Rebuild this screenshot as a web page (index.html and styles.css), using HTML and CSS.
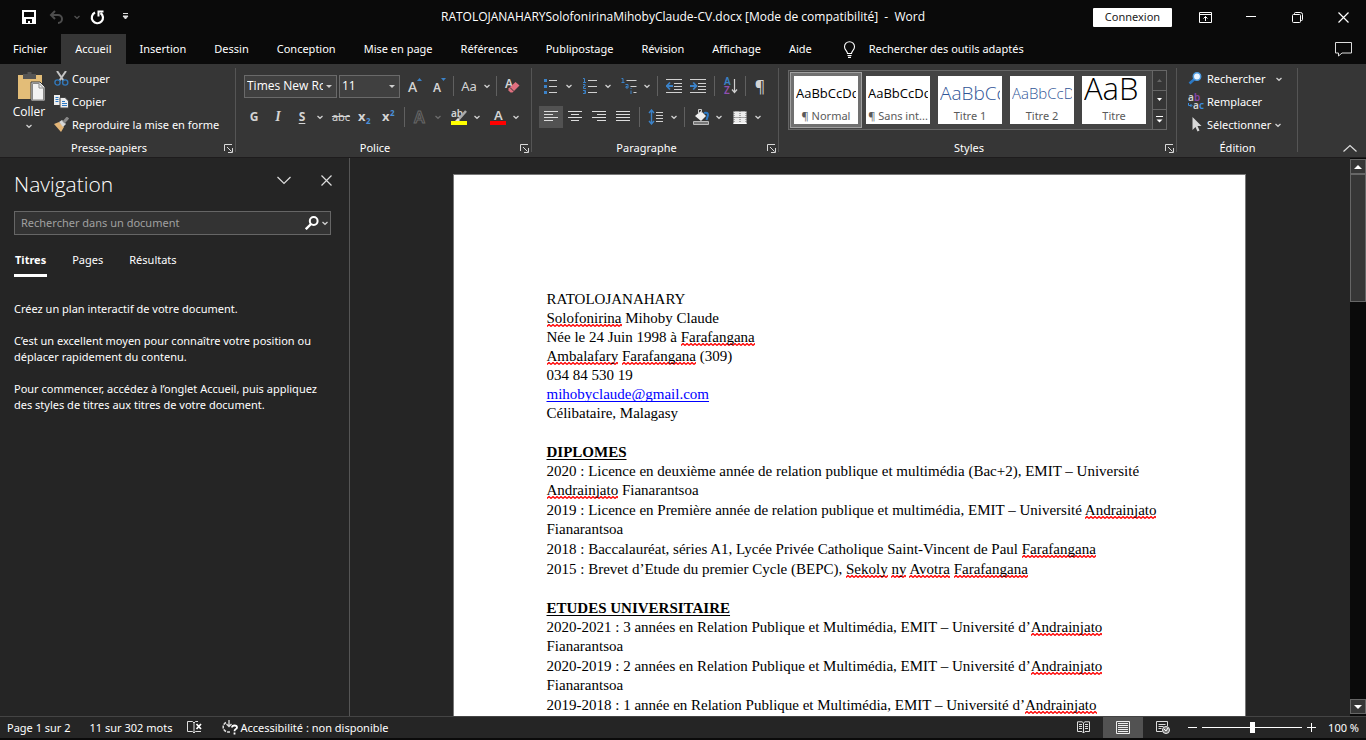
FILE: index.html
```
<!DOCTYPE html>
<html lang="fr">
<head>
<meta charset="utf-8">
<title>RATOLOJANAHARYSolofonirinaMihobyClaude-CV.docx - Word</title>
<link rel="stylesheet" href="styles.css">
</head>
<body>
<svg class="defs" aria-hidden="true">
  <symbol id="chev" viewBox="0 0 8 8"><path d="M1.500 3 4 5.300 6.500 3" fill="none" stroke="#d0d0d0" stroke-width="1.300"/></symbol>
  <symbol id="launch" viewBox="0 0 9 9"><path d="M.5 7V.5H8M3 3l4.500 4.500M8.500 4v4.500H4" fill="none" stroke="#d8d8d8"/></symbol>
</svg>

<header class="titlebar">
  <div class="quick">
    <button class="qbtn" aria-label="Enregistrer"><svg width="14" height="14" viewBox="0 0 14 14"><path d="M1 1h12v12H1z" fill="none" stroke="#fff" stroke-width="2"/><path d="M1 7h12v6H1z" fill="#fff"/><path d="M4 9h6v4H8v-2H6v2H4z" fill="#0a0a0a"/></svg></button>
    <button class="qbtn" aria-label="Annuler"><svg width="16" height="14" viewBox="0 0 16 14"><path d="M6 1 2 5l4 4M2.500 5H9a4 4 0 0 1 0 8" fill="none" stroke="#4d4d4d" stroke-width="2"/></svg></button>
    <button class="mini" aria-label="Options d'annulation"><svg width="8" height="8" class="dim"><use href="#chev"/></svg></button>
    <button class="qbtn redo" aria-label="Répéter"><svg width="15" height="15" viewBox="0 0 15 15"><path d="M5 2.600A5.600 5.600 0 1 0 10.500 3" fill="none" stroke="#fff" stroke-width="2.200"/><path d="M8.500 6.500V1.500h5" fill="none" stroke="#fff" stroke-width="2"/></svg></button>
    <button class="qbtn" aria-label="Personnaliser"><svg width="7" height="8" viewBox="0 0 7 8"><path d="M1 .5h5M1 3h5L3.500 6z" fill="#ddd" stroke="#ddd"/></svg></button>
  </div>
  <div class="doc-title">RATOLOJANAHARYSolofonirinaMihobyClaude-CV.docx [Mode de compatibilité]&nbsp; -&nbsp; Word</div>
  <div class="window-tools">
    <button class="login">Connexion</button>
    <button class="win" aria-label="Options du ruban"><svg width="13" height="11" viewBox="0 0 13 11"><path d="M.5.500h12v10H.5zM.5 2.500h12M6.500 9V4.500M4.500 6.500l2-2 2 2" fill="none" stroke="#fff"/></svg></button>
    <button class="win" aria-label="Réduire"><svg width="10" height="10" viewBox="0 0 10 10"><path d="M0 4.500h10" stroke="#fff"/></svg></button>
    <button class="win" aria-label="Niveau inférieur"><svg width="11" height="11" viewBox="0 0 11 11"><path d="M.5 3.500q0-1 1-1h6q1 0 1 1v6q0 1-1 1h-6q-1 0-1-1zM2.500 2V1.500q0-1 1-1H8.500q2 0 2 2v5q0 1-1 1H9" fill="none" stroke="#fff"/></svg></button>
    <button class="win" aria-label="Fermer"><svg width="11" height="11" viewBox="0 0 11 11"><path d="m.5.500 10 10m0-10-10 10" stroke="#fff" stroke-width="1.200"/></svg></button>
  </div>
</header>

<nav class="tabs">
  <button class="tab first">Fichier</button>
  <button class="tab active">Accueil</button>
  <button class="tab">Insertion</button>
  <button class="tab">Dessin</button>
  <button class="tab">Conception</button>
  <button class="tab">Mise en page</button>
  <button class="tab">Références</button>
  <button class="tab">Publipostage</button>
  <button class="tab">Révision</button>
  <button class="tab">Affichage</button>
  <button class="tab">Aide</button>
  <button class="tab tell"><svg width="13" height="17" viewBox="0 0 13 17"><path d="M4.500 12.500C4.500 10 1.500 9 1.500 5.700a5 5 0 0 1 10 0C11.500 9 8.500 10 8.500 12.500zM4.500 14.500h4M5 16.400h3" fill="none" stroke="#fff" stroke-width="1.100"/></svg>Rechercher des outils adaptés</button>
  <button class="comment" aria-label="Commentaires"><svg width="17" height="15" viewBox="0 0 17 15"><path d="M.5.500h16v10.500H7L3.500 14v-3h-3z" fill="none" stroke="#ddd"/></svg></button>
</nav>

<section class="ribbon">
  <div class="group clipboard">
    <div class="body clip-body">
      <button class="paste">
        <svg width="30" height="31" viewBox="0 0 30 31"><path d="M2 4h24v24H2z" fill="#e3bd78"/><path d="M7 3h4.500V1h4v2H20v5H7z" fill="#555"/><path d="M15 11h9l5 5v14H15z" fill="#eee" stroke="#363636"/><path d="M16.500 12.500h6.500l4.500 4.500v12h-11z" fill="#f2f2f2" stroke="#888"/><path d="M23 12.500V17h4.500" fill="none" stroke="#888"/></svg>
        <span>Coller</span>
        <svg width="8" height="8"><use href="#chev"/></svg>
      </button>
      <div class="stack">
        <button class="item"><svg width="15" height="15" viewBox="0 0 15 15"><path d="m3 0 6.500 9.500M12 0 5.500 9.500" stroke="#c4c4c4" stroke-width="2"/><circle cx="3.500" cy="11.500" r="2.600" fill="none" stroke="#3277b8" stroke-width="1.400"/><circle cx="11.200" cy="11.500" r="2.600" fill="none" stroke="#3277b8" stroke-width="1.400"/></svg>Couper</button>
        <button class="item"><svg width="15" height="15" viewBox="0 0 15 15"><path d="M0 1h6v10H0z" fill="#eee"/><path d="M1.500 3.500h3m-3 2h3m-3 2h3" stroke="#2b78c4"/><path d="M6 3.500h5l3.500 3.500v7H6z" fill="#eee" stroke="#444"/><path d="M8 7.500h3m-3 2h5m-5 2h5" stroke="#2b78c4"/></svg>Copier</button>
        <button class="item"><svg width="15" height="15" viewBox="0 0 15 15"><path d="m0 7 5-2 5 5-3 5z" fill="#e3b577"/><path d="M5 5 8 3l4 4-3 3z" fill="#d8d8d8"/><path d="m9.500 5.500 4.500-5" stroke="#888" stroke-width="3"/></svg>Reproduire la mise en forme</button>
      </div>
    </div>
    <div class="label"><span>Presse-papiers</span><button class="launch" aria-label="Presse-papiers"><svg width="9" height="9"><use href="#launch"/></svg></button></div>
  </div>

  <div class="group font">
    <div class="body">
      <div class="row">
        <div class="combo name"><select aria-label="Police"><option>Times New Roman</option></select></div>
        <div class="combo size"><select aria-label="Taille"><option>11</option></select></div>
        <button class="btn" aria-label="Agrandir"><svg width="18" height="20" viewBox="0 0 18 20"><text x="3" y="16" class="g15">A</text><path d="m12 5 2.500-3L17 5z" fill="#3b82c8"/></svg></button>
        <button class="btn" aria-label="Réduire la police"><svg width="18" height="20" viewBox="0 0 18 20"><text x="4" y="16" class="g12">A</text><path d="m12 2 2.500 3L17 2z" fill="#3b82c8"/></svg></button>
        <i class="sep"></i>
        <button class="split"><span class="big">Aa</span><svg width="8" height="8"><use href="#chev"/></svg></button>
        <i class="sep"></i>
        <button class="btn wipe" aria-label="Effacer la mise en forme"><svg width="16" height="20" viewBox="0 0 16 20"><text x="1" y="12" class="g12">A</text><path d="m4.500 12.500 7-6.500 4 3.500-7 7h-2l-2-2z" fill="#e0707f"/><path d="m6 11.500 4 4" stroke="#363636"/></svg></button>
      </div>
      <div class="row row-tools">
        <button class="btn b">G</button>
        <button class="btn it">I</button>
        <button class="split"><span class="b u">S</span><svg width="8" height="8"><use href="#chev"/></svg></button>
        <button class="btn strike">abc</button>
        <button class="btn" aria-label="Indice"><svg width="16" height="20" viewBox="0 0 16 20"><text x="1" y="14" class="gx">x</text><text x="9" y="17" class="gs">2</text></svg></button>
        <button class="btn" aria-label="Exposant"><svg width="16" height="20" viewBox="0 0 16 20"><text x="1" y="14" class="gx">x</text><text x="9" y="9" class="gs">2</text></svg></button>
        <i class="sep"></i>
        <button class="split off" aria-label="Effets de texte"><svg width="18" height="20" viewBox="0 0 18 20"><text x="3" y="16" class="gout">A</text></svg><svg width="8" height="8" class="dim"><use href="#chev"/></svg></button>
        <button class="split" aria-label="Surlignage"><svg width="18" height="20" viewBox="0 0 18 20"><text x="1" y="10" class="gab">ab</text><path d="m16 4-7 8" stroke="#aaa" stroke-width="2.500"/><path d="m5 14 3-3 2 2-1 1z" fill="#ddd"/><path d="M1 14h16v4H1z" fill="#ff0"/></svg><svg width="8" height="8"><use href="#chev"/></svg></button>
        <button class="split" aria-label="Couleur de police"><svg width="18" height="20" viewBox="0 0 18 20"><text x="5" y="13" class="g13">A</text><path d="M1 14h16v4H1z" fill="red"/></svg><svg width="8" height="8"><use href="#chev"/></svg></button>
      </div>
    </div>
    <div class="label"><span>Police</span><button class="launch" aria-label="Options de police"><svg width="9" height="9"><use href="#launch"/></svg></button></div>
  </div>

  <div class="group para">
    <div class="body">
      <div class="row">
        <button class="split" aria-label="Puces"><svg width="16" height="16" viewBox="0 0 16 16"><path d="M1 1h3v3H1zM1 7h3v3H1zM1 13h3v3H1z" fill="#3b82c8"/><path d="M6 2.500h8m-8 6h8m-8 6h8" stroke="#d0d0d0"/></svg><svg width="8" height="8"><use href="#chev"/></svg></button>
        <button class="split" aria-label="Numérotation"><svg width="16" height="16" viewBox="0 0 16 16"><path d="M1 .5h1.500V4M1 4.500h3M1 6.500h2v2H1.500v2H4M1 12.500h2.500v3H1M2 14h1.500" fill="none" stroke="#3b82c8"/><path d="M6 2.500h9m-9 6h9m-9 6h9" stroke="#d0d0d0"/></svg><svg width="8" height="8"><use href="#chev"/></svg></button>
        <button class="split" aria-label="Liste à plusieurs niveaux"><svg width="17" height="17" viewBox="0 0 17 17"><path d="M1 .5h1.500V4M1 4.500h3M5 6.500h2.500V10H5.500V8.500H7M10.500 12.500V16M10.500 10v1" fill="none" stroke="#3b82c8"/><path d="M6 2.500h10m-6 6h6m-3 6h3" stroke="#d0d0d0"/></svg><svg width="8" height="8"><use href="#chev"/></svg></button>
        <i class="sep"></i>
        <button class="btn" aria-label="Diminuer le retrait"><svg width="16" height="14" viewBox="0 0 16 14"><path d="M0 .5h16M8 4.500h8M8 7.500h8M8 10.500h8M0 13.500h16" stroke="#d0d0d0"/><path d="M0 7h7M4 3.500.8 7 4 10.500" fill="none" stroke="#3b82c8" stroke-width="1.800"/></svg></button>
        <button class="btn" aria-label="Augmenter le retrait"><svg width="16" height="14" viewBox="0 0 16 14"><path d="M0 .5h16M8 4.500h8M8 7.500h8M8 10.500h8M0 13.500h16" stroke="#d0d0d0"/><path d="M0 7h7M3.200 3.500 6.400 7l-3.200 3.500" fill="none" stroke="#3b82c8" stroke-width="1.800"/></svg></button>
        <i class="sep"></i>
        <button class="btn" aria-label="Trier"><svg width="16" height="20" viewBox="0 0 16 20"><text x="1" y="9" class="ga">A</text><text x="1" y="18" class="gz">Z</text><path d="M11.500 3v13M9 13.500l2.500 3 2.500-3" fill="none" stroke="#d0d0d0" stroke-width="1.200"/></svg></button>
        <i class="sep"></i>
        <button class="btn pil">¶</button>
      </div>
      <div class="row row-tools">
        <button class="btn on" aria-label="Aligner à gauche"><svg width="14" height="12" viewBox="0 0 14 12"><path d="M0 .5h14M0 3.500h9M0 6.500h14M0 9.500h9" stroke="#ddd"/></svg></button>
        <button class="btn" aria-label="Centrer"><svg width="14" height="12" viewBox="0 0 14 12"><path d="M0 .5h14M3 3.500h8M0 6.500h14M3 9.500h8" stroke="#ddd"/></svg></button>
        <button class="btn" aria-label="Aligner à droite"><svg width="14" height="12" viewBox="0 0 14 12"><path d="M0 .5h14M5 3.500h9M0 6.500h14M5 9.500h9" stroke="#ddd"/></svg></button>
        <button class="btn" aria-label="Justifier"><svg width="14" height="12" viewBox="0 0 14 12"><path d="M0 .5h14M0 3.500h14M0 6.500h14M0 9.500h14" stroke="#ddd"/></svg></button>
        <i class="sep"></i>
        <button class="split" aria-label="Interligne"><svg width="16" height="16" viewBox="0 0 16 16"><path d="M3.500 1v14M1 4l2.500-3L6 4M1 12l2.500 3L6 12" fill="none" stroke="#3b82c8" stroke-width="1.400"/><path d="M8 3.500h7m-7 3h7m-7 3h7m-7 3h7" stroke="#d0d0d0"/></svg><svg width="8" height="8"><use href="#chev"/></svg></button>
        <i class="sep"></i>
        <button class="split" aria-label="Trame de fond"><svg width="18" height="18" viewBox="0 0 18 18"><path d="M3 8l6-5 5 5-5 5z" fill="#eee"/><path d="M6.500 5V1.500h3V5" fill="none" stroke="#ccc"/><path d="M12 5q4-1 4 2l-1.500 5" fill="none" stroke="#2b78c4" stroke-width="2"/><path d="M1.500 13.500h15v3h-15z" fill="#777" stroke="#bbb"/></svg><svg width="8" height="8"><use href="#chev"/></svg></button>
        <button class="split" aria-label="Bordures"><svg class="grid-icon" width="13" height="13" viewBox="0 0 13 13"><path d="M0 0h13v13H0z" fill="#ececec"/><path d="M6.500 0v12M0 6.500h13M.5 0v12M12.500 0v12M0 .5h13" stroke="#666" stroke-dasharray="1 1"/><path d="M0 12.500h13" stroke="#fff"/></svg><svg width="8" height="8"><use href="#chev"/></svg></button>
      </div>
    </div>
    <div class="label"><span>Paragraphe</span><button class="launch" aria-label="Paramètres de paragraphe"><svg width="9" height="9"><use href="#launch"/></svg></button></div>
  </div>

  <div class="group styles">
    <div class="body gallery">
      <button class="cell sel"><span class="card"><span class="sample">AaBbCcDd</span><span class="cap">¶ Normal</span></span></button>
      <button class="cell"><span class="card"><span class="sample">AaBbCcDd</span><span class="cap">¶ Sans int...</span></span></button>
      <button class="cell"><span class="card"><span class="sample t1">AaBbCc</span><span class="cap">Titre 1</span></span></button>
      <button class="cell"><span class="card"><span class="sample t2">AaBbCcD</span><span class="cap">Titre 2</span></span></button>
      <button class="cell"><span class="card"><span class="sample t0">AaB</span><span class="cap">Titre</span></span></button>
      <div class="scroller">
        <button aria-label="Ligne précédente"><svg width="7" height="4" viewBox="0 0 7 4"><path d="M1 4h5L3.500 1z" fill="#666"/></svg></button>
        <button aria-label="Ligne suivante"><svg width="7" height="4" viewBox="0 0 7 4"><path d="M1 0h5L3.500 3z" fill="#fff"/></svg></button>
        <button aria-label="Autres"><svg width="7" height="8" viewBox="0 0 7 8"><path d="M0 .5h7" stroke="#fff"/><path d="M.5 3.500h6l-3 3z" fill="#fff"/></svg></button>
      </div>
    </div>
    <div class="label"><span>Styles</span><button class="launch" aria-label="Volet Styles"><svg width="9" height="9"><use href="#launch"/></svg></button></div>
  </div>

  <div class="group edit">
    <div class="body stack">
      <button class="item"><svg width="15" height="15" viewBox="0 0 15 15"><path d="M1 12.500 6 8" stroke="#2b78c4" stroke-width="2.600"/><circle cx="8.500" cy="5.500" r="3.700" fill="#eaf4ff" stroke="#4d9be0" stroke-width="1.500"/></svg>Rechercher<svg class="far" width="8" height="8"><use href="#chev"/></svg></button>
      <button class="item"><svg width="16" height="20" viewBox="0 0 16 20"><text x="0" y="9" class="r1">a</text><text x="6" y="9" class="r2">b</text><text x="5" y="17" class="r1">a</text><text x="11" y="17" class="r3">c</text><path d="M.5 11v2.500h3M2.500 12 4 13.500 2.500 15" fill="none" stroke="#3b8de0"/></svg>Remplacer</button>
      <button class="item"><svg width="15" height="15" viewBox="0 0 15 15"><path d="m4 0 9 9H9l2 4.500-2 1L7 10l-3 3z" fill="#d8d8d8"/></svg>Sélectionner<svg width="8" height="8"><use href="#chev"/></svg></button>
    </div>
    <div class="label"><span>Édition</span></div>
  </div>
  <button class="collapse" aria-label="Réduire le ruban"><svg width="14" height="8" viewBox="0 0 14 8"><path d="m.5 7.500 6.500-6 6.500 6" fill="none" stroke="#ddd" stroke-width="1.200"/></svg></button>
</section>

<main class="work">
  <aside class="pane">
    <div class="pane-head">
      <h2>Navigation</h2>
      <button aria-label="Options du volet"><svg width="14" height="9" viewBox="0 0 14 9"><path d="m.5 1 6.500 6.500L13.500 1" fill="none" stroke="#ddd" stroke-width="1.200"/></svg></button>
      <button aria-label="Fermer le volet"><svg width="11" height="11" viewBox="0 0 11 11"><path d="m.5.500 10 10m0-10-10 10" stroke="#ddd" stroke-width="1.200"/></svg></button>
    </div>
    <div class="search">
      <input type="text" aria-label="Rechercher dans un document" placeholder="Rechercher dans un document">
      <button aria-label="Rechercher"><svg width="14" height="14" viewBox="0 0 14 14"><circle cx="8.700" cy="5" r="3.900" fill="none" stroke="#fff" stroke-width="2"/><path d="M6 8 .8 13.200" stroke="#fff" stroke-width="2.400"/></svg><svg width="8" height="8"><use href="#chev"/></svg></button>
    </div>
    <div class="pane-tabs">
      <button class="cur">Titres</button><button>Pages</button><button>Résultats</button>
    </div>
    <div class="hint">
      <p>Créez un plan interactif de votre document.</p>
      <p>C’est un excellent moyen pour connaître votre position ou déplacer rapidement du contenu.</p>
      <p>Pour commencer, accédez à l’onglet Accueil, puis appliquez des styles de titres aux titres de votre document.</p>
    </div>
  </aside>

  <div class="canvas">
    <article class="page">
      <section>
        <p>RATOLOJANAHARY</p>
        <p><span class="err">Solofonirina</span> Mihoby Claude</p>
        <p>Née le 24 Juin 1998 à <span class="err">Farafangana</span></p>
        <p><span class="err">Ambalafary</span> <span class="err">Farafangana</span> (309)</p>
        <p>034 84 530 19</p>
        <p><a href="mailto:mihobyclaude@gmail.com">mihobyclaude@gmail.com</a></p>
        <p>Célibataire, Malagasy</p>
      </section>
      <section class="dated">
        <h3>DIPLOMES</h3>
        <p>2020 : Licence en deuxième année de relation publique et multimédia (Bac+2), EMIT – Université <span class="err">Andrainjato</span> Fianarantsoa</p>
        <p>2019 : Licence en Première année de relation publique et multimédia, EMIT – Université <span class="err">Andrainjato</span> Fianarantsoa</p>
        <p>2018 : Baccalauréat, séries A1, Lycée Privée Catholique Saint-Vincent de Paul <span class="err">Farafangana</span></p>
        <p>2015 : Brevet d’Etude du premier Cycle (BEPC), <span class="err">Sekoly</span> <span class="err">ny</span> <span class="err">Avotra</span> <span class="err">Farafangana</span></p>
      </section>
      <section class="dated">
        <h3>ETUDES UNIVERSITAIRE</h3>
        <p>2020-2021 : 3 années en Relation Publique et Multimédia, EMIT – Université d’<span class="err">Andrainjato</span> Fianarantsoa</p>
        <p>2020-2019 : 2 années en Relation Publique et Multimédia, EMIT – Université d’<span class="err">Andrainjato</span> Fianarantsoa</p>
        <p>2019-2018 : 1 année en Relation Publique et Multimédia, EMIT – Université d’<span class="err">Andrainjato</span></p>
      </section>
    </article>
  </div>

  <div class="vbar">
    <button aria-label="Défiler vers le haut"><svg width="8" height="4" viewBox="0 0 8 4"><path d="M0 4h8L4 0z" fill="#fff"/></svg></button>
    <div class="thumb"></div>
    <button class="down" aria-label="Défiler vers le bas"><svg width="8" height="4" viewBox="0 0 8 4"><path d="M0 0h8L4 4z" fill="#fff"/></svg></button>
  </div>
</main>

<footer class="status">
  <button>Page 1 sur 2</button>
  <button class="words">11 sur 302 mots</button>
  <button class="proof" aria-label="Vérification"><svg width="15" height="13" viewBox="0 0 15 13"><path d="M7 2 5.500.500h-5v10h5L7 12l1.500-1.500H14M7 2v10M7 2 8.500.500H11" fill="none" stroke="#ddd"/><path d="m9.500 3 4.500 5m0-5-4.500 5" stroke="#fff" stroke-width="1.700"/></svg></button>
  <button class="access"><svg width="17" height="15" viewBox="0 0 17 15"><path d="M4 2.500A5 5 0 0 0 6 12h2" fill="none" stroke="#ddd" stroke-width="1.500" stroke-dasharray="3 1"/><path d="M7 0v6m-2.500-2L7 6.500 9.500 4" fill="none" stroke="#ddd" stroke-width="1.300"/><path d="M10 7.500q0-2 2.500-2t2.500 2q0 1-1.500 1.700-1 .6-1 2M12.500 12.500v2" fill="none" stroke="#fff" stroke-width="1.800"/></svg>Accessibilité : non disponible</button>
  <div class="views">
    <button aria-label="Mode Lecture"><svg width="13" height="13" viewBox="0 0 13 13"><path d="M6.500 2 5 .8H.5v9.700H5L6.500 12 8 10.500h4.500V.8H8zM6.500 2v10M2 3.500h3m-3 2h3m-3 2h3M8 3.500h3m-3 2h3m-3 2h3" fill="none" stroke="#ddd"/></svg></button>
    <button class="cur" aria-label="Page"><svg width="14" height="13" viewBox="0 0 14 13"><path d="M.5.500h13v12H.5zM2 2.500h10M2 4.500h10M2 6.500h10M2 8.500h10M2 10.500h10" fill="none" stroke="#eee"/></svg></button>
    <button aria-label="Web"><svg width="14" height="13" viewBox="0 0 14 13"><path d="M11.500 5V.5H.5v10h6M2.500 3.500h7m-7 2h5m-5 2h3" fill="none" stroke="#ddd"/><circle cx="10" cy="9" r="3.500" fill="#777" stroke="#eee"/><path d="m8 8 2 2 2-3" fill="none" stroke="#fff"/></svg></button>
  </div>
  <div class="zoom">
    <button aria-label="Zoom arrière"><svg width="9" height="9" viewBox="0 0 9 9"><path d="M0 4.500h9" stroke="#fff"/></svg></button>
    <input type="range" min="0" max="100" value="50" aria-label="Zoom">
    <button aria-label="Zoom avant"><svg width="9" height="9" viewBox="0 0 9 9"><path d="M0 4.500h9M4.500 0v9" stroke="#fff"/></svg></button>
    <button class="pct">100 %</button>
  </div>
</footer>
</body>
</html>
```
FILE: styles.css
```
* { box-sizing: border-box; }
body {
  margin: 0;
  height: 100vh;
  display: flex;
  flex-direction: column;
  overflow: hidden;
  background: #0a0a0a;
  color: #fff;
  font: 11px/16px "Noto Sans", "Open Sans", sans-serif;
}
button {
  margin: 0;
  padding: 0;
  border: 0;
  background: none;
  color: inherit;
  font: inherit;
  display: flex;
  align-items: center;
  justify-content: center;
  white-space: nowrap;
}
svg { display: block; flex: none; }
p, h2, h3 { margin: 0; }
.defs { position: absolute; width: 0; height: 0; }
.dim { opacity: .35; }

/* Title bar */
.titlebar {
  flex: none;
  height: 34px;
  display: grid;
  grid-template-columns: 1fr auto 1fr;
  align-items: center;
}
.doc-title { font: 12px/16px "Open Sans", sans-serif; }
.quick { display: flex; align-items: center; padding-left: 15px; }
.qbtn { width: 28px; height: 24px; }
.mini { width: 12px; height: 24px; }
.window-tools { display: flex; justify-content: flex-end; align-items: center; }
.login {
  width: 79px;
  height: 19px;
  margin-right: 10px;
  background: #fff;
  color: #222;
  border-radius: 1px;
}
.win { width: 46px; height: 30px; }

/* Ribbon tabs */
.tabs { flex: none; height: 30px; display: flex; }
.tab { padding: 0 14px; }
.tab.first { padding-left: 13px; }
.tab.active { background: #363636; }
.tab.tell { gap: 13px; padding-left: 17px; }
.comment { margin-left: auto; margin-right: 14px; }

/* Ribbon */
.ribbon {
  flex: none;
  height: 94px;
  display: flex;
  background: #363636;
  border-bottom: 1px solid #1e1c1d;
}
.group {
  position: relative;
  flex: none;
  display: flex;
  flex-direction: column;
  padding-top: 11px;
}
.group::after {
  content: "";
  position: absolute;
  right: 0;
  top: 4px;
  bottom: 5px;
  width: 1px;
  background: #555;
}
.clipboard { width: 236px; padding-top: 3px; }
.font { width: 296px; }
.para { width: 247px; }
.styles { width: 398px; padding-top: 6px; }
.edit { width: 121px; padding-top: 3px; }
.body { flex: 1; }
.label { display: flex; justify-content: center; padding: 0 18px 1px 0; }
.edit .label { padding-right: 0; }
.launch { position: absolute; right: 2px; bottom: 1px; width: 12px; height: 16px; }
.clip-body { display: flex; padding-left: 8px; }
.paste { flex-direction: column; justify-content: flex-start; width: 42px; padding-top: 4px; gap: 1px; }
.paste span { font: 12px/18px "Open Sans", sans-serif; }
.paste > svg:first-child { margin-left: 3px; }
.stack { display: flex; flex-direction: column; align-items: flex-start; }
.item { height: 23px; gap: 3px; }
.clipboard .item { padding-left: 4px; }
.edit .item { padding-left: 11px; }
.edit .item > svg:first-child { width: 16px; }
.far { margin-left: 7px; }
.row { display: flex; align-items: center; height: 22px; padding-left: 7px; }
.row-tools { margin-top: 9px; }
.font .row { padding-left: 8px; }
.font .row-tools { padding-left: 6px; }
.combo {
  position: relative;
  height: 23px;
  border: 1px solid #6a6a6a;
  background: #404040;
  margin-right: 2px;
}
.combo::after {
  content: "";
  position: absolute;
  right: 4px;
  top: 9px;
  border: 3px solid transparent;
  border-top-color: #d0d0d0;
  border-bottom: 0;
}
.name { width: 93px; }
.size { width: 61px; }
.combo select {
  appearance: none;
  width: 100%;
  height: 100%;
  padding: 0 13px 0 2px;
  border: 0;
  background: none;
  color: #fff;
  font: 12px/20px "Open Sans", sans-serif;
  overflow: hidden;
}
.btn { width: 24px; height: 22px; color: #d4d4d4; }
.on { background: #525252; }
.split { width: 36px; height: 22px; color: #d4d4d4; }
.split > :first-child { flex: 1; min-width: 24px; }
.split > svg:last-child { margin: 0 2px; }
.split + .split, .split + .btn { margin-left: 3px; }
.sep { flex: none; width: 1px; height: 20px; margin: 0 3px; background: #606060; }
.para .sep { margin: 0 4px; }
.para .sep:has(+ .pil) { margin: 0 2px; }
.big { font-size: 13px; }
.b { font-weight: 700; font-size: 12px; }
.u { text-decoration: underline; text-underline-offset: 2px; }
.it { font: italic 700 14px "Liberation Serif", serif; }
.strike { text-decoration: line-through; }
.pil { font-size: 16px; }
text { fill: #d4d4d4; font-family: "Noto Sans", sans-serif; }
.g15 { font-size: 14px; font-weight: 500; }
.g13 { font-size: 13px; font-weight: 600; }
.g12 { font-size: 12px; font-weight: 600; }
.gx { font-size: 13px; font-weight: 700; }
.gs { font-size: 8px; font-weight: 700; fill: #4a90d8; }
.gout { font-size: 16px; font-weight: 600; fill: none; stroke: #666; }
.gab { font-size: 10px; font-weight: 600; }
.ga { font-size: 10px; fill: #3b82c8; font-weight: 600; }
.gz { font-size: 10px; fill: #9050b0; font-weight: 600; }
.r1, .r2, .r3 { font-size: 10px; font-weight: 600; }
.r2 { fill: #8a45a8; }
.r3 { fill: #3b8de0; }

/* Styles gallery */
.gallery {
  display: flex;
  flex: none;
  height: 60px;
  margin: 0 10px 0 9px;
  padding: 1px 0 1px 1px;
  border: 1px solid #666;
  background: #444;
}
.styles .label { margin-top: auto; }
.cell { width: 72px; height: 56px; border: 1px solid transparent; }
.cell.sel { background: #707070; border-color: #a0a0a0; }
.card {
  display: flex;
  flex-direction: column;
  align-items: stretch;
  width: 64px;
  height: 48px;
  padding: 0 2px;
  background: #fff;
  color: #5a5a5a;
  overflow: hidden;
}
.sample {
  height: 32px;
  overflow: hidden;
  text-align: left;
  color: #000;
  font: 13px/34px "Open Sans", sans-serif;
}
.cap { text-align: center; }
.t1 { font-weight: 300; font-size: 19px; color: #2f5597; }
.t2 { font-weight: 300; font-size: 15px; color: #2f5597; }
.t0 { font-weight: 300; font-size: 31px; line-height: 24px; }
.scroller { width: 15px; margin: -2px -1px -2px auto; display: flex; flex-direction: column; border: 1px solid #666; }
.scroller button { flex: 1; width: 100%; background: #363636; border-bottom: 1px solid #666; }
.scroller button:last-child { border-bottom: 0; }
.collapse { margin: auto 9px 5px auto; }

/* Work area */
.work { flex: 1; min-height: 0; display: flex; background: #252525; }
.pane { flex: none; width: 350px; padding: 12px 18px 0 14px; border-right: 1px solid #555; }
.pane-head { display: flex; align-items: center; height: 28px; }
.pane-head h2 { flex: 1; font: 300 21px/28px "Open Sans", sans-serif; }
.pane-head button { width: 20px; height: 20px; margin-bottom: 8px; }
.pane-head button + button { margin-left: 22px; margin-right: -5px; }
.search {
  display: flex;
  height: 24px;
  margin-top: 13px;
  border: 1px solid #666;
  background: #333;
}
.search input { flex: 1; min-width: 0; border: 0; padding: 0 6px; background: none; color: #fff; font: inherit; }
.search input::placeholder { color: #a0a0a0; opacity: 1; }
.search button { gap: 2px; padding-right: 1px; }
.pane-tabs { display: flex; gap: 24px; margin-top: 13px; height: 29px; }
.pane-tabs button { padding: 0 1px 2px; border-bottom: 3px solid transparent; }
.pane-tabs .cur { font-weight: 700; border-color: #fff; }
.hint { margin-top: 24px; display: flex; flex-direction: column; gap: 16px; }

.canvas { flex: 1; display: flex; justify-content: center; padding: 16px 2px 0 0; overflow: hidden; }
.page {
  flex: none;
  width: 793px;
  min-height: 1122px;
  padding: 115px 80px 0 93px;
  border: 1px solid #777;
  background: #fff;
  color: #000;
  font: 15px/19px "Liberation Serif", "Times New Roman", serif;
}
.page section + section { margin-top: 20px; }
.page h3 { font: inherit; font-weight: 700; text-decoration: underline; text-underline-offset: 2px; }
.page a { color: #00f; text-decoration: underline; text-underline-offset: 2px; text-decoration-skip-ink: none; }
.dated p + p { margin-top: 1px; }
/* Spelling squiggle */
.err {
  background: url("data:image/svg+xml,%3Csvg xmlns='http://www.w3.org/2000/svg' width='4' height='3'%3E%3Cpath d='M0 2.500 2 .5 4 2.500' fill='none' stroke='red' stroke-width='1.300'/%3E%3C/svg%3E") left bottom repeat-x;
  padding-bottom: 1px;
}

.vbar { flex: none; width: 16px; display: flex; flex-direction: column; background: #0a0a0a; padding-bottom: 2px; }
.vbar button { width: 16px; height: 15px; border: 1px solid #666; background: #363636; margin-top: 1px; }
.thumb { height: 128px; border: 1px solid #666; background: #363636; }
.vbar .down { margin-top: auto; }

/* Status bar */
.status {
  flex: none;
  height: 24px;
  display: flex;
  align-items: stretch;
  padding-left: 7px;
  background: #252525;
  border-top: 1px solid #444;
  border-bottom: 2px solid #0a0a0a;
}
.words { margin-left: 19px; }
.proof { margin-left: 15px; }
.access { margin-left: 20px; gap: 1px; }
.views { display: flex; margin-left: auto; }
.views button { width: 40px; }
.views .cur { background: #525252; }
.zoom { display: flex; align-items: center; padding-right: 7px; margin-left: 5px; }
.zoom input { appearance: none; width: 100px; height: 14px; margin: 0 5px; background: linear-gradient(#fff, #fff) center / 100% 1px no-repeat; }
.zoom input::-webkit-slider-thumb { appearance: none; width: 5px; height: 11px; background: #fff; }
.pct { margin-left: 12px; }
```
